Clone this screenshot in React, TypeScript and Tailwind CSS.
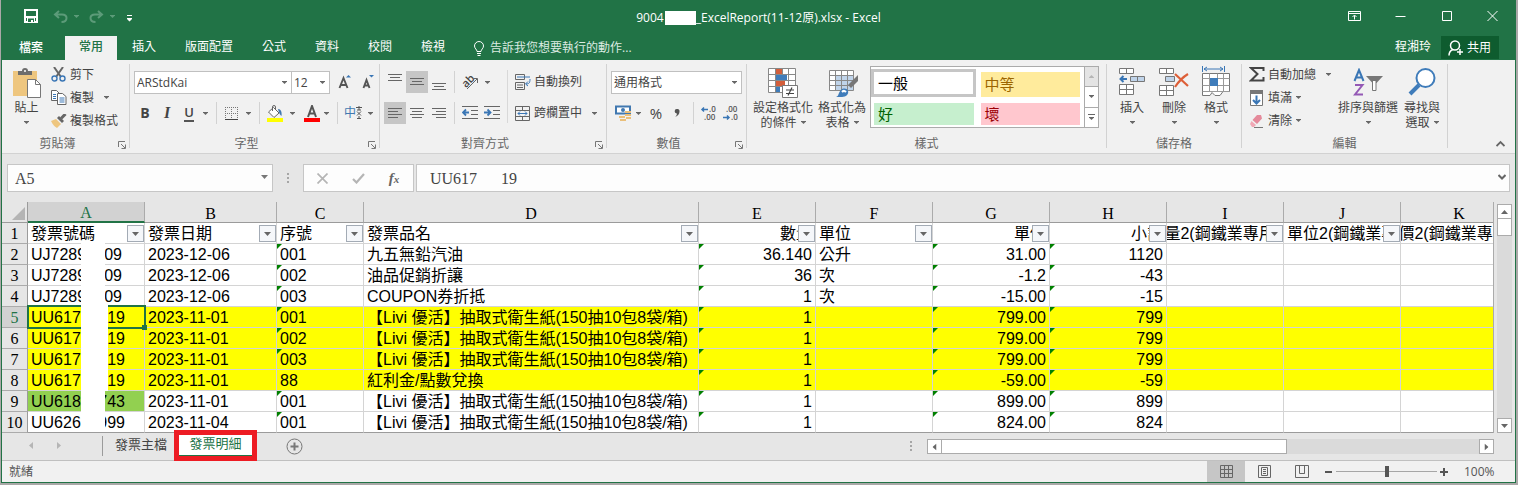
import { useState } from "react"
import type { ReactNode } from "react"
import clsx from "clsx"

type Align = "left" | "right"

interface Column {
  letter: string
  title: string
  width: string
  align: Align
  filter: boolean
}

interface Row {
  id: [string, string]
  fill?: "yellow" | "green"
  cells: string[]
}

const TABS = ["常用", "插入", "版面配置", "公式", "資料", "校閱", "檢視"]

const COLUMNS: Column[] = [
  { letter: "A", title: "發票號碼", width: "w-[117px]", align: "left", filter: true },
  { letter: "B", title: "發票日期", width: "w-[132px]", align: "left", filter: true },
  { letter: "C", title: "序號", width: "w-[87px]", align: "left", filter: true },
  { letter: "D", title: "發票品名", width: "w-[335px]", align: "left", filter: true },
  { letter: "E", title: "數量", width: "w-[117px]", align: "right", filter: true },
  { letter: "F", title: "單位", width: "w-[117px]", align: "left", filter: true },
  { letter: "G", title: "單價", width: "w-[117px]", align: "right", filter: true },
  { letter: "H", title: "小計", width: "w-[117px]", align: "right", filter: true },
  { letter: "I", title: "量2(鋼鐵業專用)", width: "w-[117px]", align: "right", filter: true },
  { letter: "J", title: "單位2(鋼鐵業專用)", width: "w-[117px]", align: "left", filter: true },
  { letter: "K", title: "價2(鋼鐵業專用)", width: "w-[117px]", align: "right", filter: false },
]

const TISSUE = "【Livi 優活】抽取式衛生紙(150抽10包8袋/箱)"

const ROWS: Row[] = [
  { id: ["UJ7289", "09"], cells: ["2023-12-06", "001", "九五無鉛汽油", "36.140", "公升", "31.00", "1120"] },
  { id: ["UJ7289", "09"], cells: ["2023-12-06", "002", "油品促銷折讓", "36", "次", "-1.2", "-43"] },
  { id: ["UJ7289", "09"], cells: ["2023-12-06", "003", "COUPON券折抵", "1", "次", "-15.00", "-15"] },
  { id: ["UU6170", "19"], fill: "yellow", cells: ["2023-11-01", "001", TISSUE, "1", "", "799.00", "799"] },
  { id: ["UU6170", "19"], fill: "yellow", cells: ["2023-11-01", "002", TISSUE, "1", "", "799.00", "799"] },
  { id: ["UU6170", "19"], fill: "yellow", cells: ["2023-11-01", "003", TISSUE, "1", "", "799.00", "799"] },
  { id: ["UU6170", "19"], fill: "yellow", cells: ["2023-11-01", "88", "紅利金/點數兌換", "1", "", "-59.00", "-59"] },
  { id: ["UU6189", "743"], fill: "green", cells: ["2023-11-01", "001", TISSUE, "1", "", "899.00", "899"] },
  { id: ["UU626", "999"], cells: ["2023-11-04", "001", TISSUE, "1", "", "824.00", "824"] },
]

// columns whose numbers are stored as text get the green corner
const TEXT_NUMBER_COLUMNS = ["C", "E", "G", "H"]
const SELECTED_ROW = 5

export default function App() {
  return (
    <div className="bg-[#aaa8a8] pl-px pr-[2px] pb-[2px] font-['Open_Sans','Noto_Sans_CJK_TC',sans-serif] text-xs text-[#444]">
      <div className="border-x border-b border-[#217346] overflow-hidden">
        <header className="bg-[#217346] text-white">
          <TitleBar />
          <TabBar />
        </header>
        <Ribbon />
        <FormulaBar />
        <div className="flex bg-[#e6e6e6]">
          <div className="flex-1 min-w-0 overflow-hidden border-r border-[#ababab]">
            <Sheet />
          </div>
          <VerticalScroll />
        </div>
        <SheetTabs />
        <StatusBar />
      </div>
    </div>
  )
}

function TitleBar() {
  return (
    <div className="grid grid-cols-[1fr_auto_1fr] h-9">
      <div className="flex items-center pl-[22px] pb-1">
        <button type="button" aria-label="儲存" className="w-[29px]">
          <svg width="14" height="14" viewBox="0 0 14 14">
            <path d="M0 0h14v14H0z" fill="#fff" />
            <path d="M2 2h10v5H2zM2 9h1v3H2zM11 9h1v3h-1zM4 9.500h6V13H9v-2H7v2H4z" fill="#217346" />
          </svg>
        </button>
        <button type="button" aria-label="復原" className="flex items-center gap-1.5 w-9 text-[#5c9b79]">
          <UndoIcon />
          <Caret />
        </button>
        <button type="button" aria-label="取消復原" className="flex items-center gap-1.5 w-[38px] text-[#5c9b79]">
          <UndoIcon flipped />
          <Caret />
        </button>
        <button type="button" aria-label="自訂快速存取工具列" className="pt-1">
          <svg width="5" height="7" viewBox="0 0 5 7" fill="#fff">
            <path d="M0 0h5v1H0zM0 3h5v1L2.500 6.500 0 4z" />
          </svg>
        </button>
      </div>
      <h1 className="flex items-center text-xs">
        9004
        <span className="w-[31px] h-3.5 ml-px bg-white" />
        _ExcelReport(11-12原).xlsx - Excel
      </h1>
      <div className="flex justify-end pb-1">
        <WindowButton label="功能區顯示選項">
          <path d="M.5.5h12v9H.5zM.5 2.500h12M6.500 8.500v-4M4.500 6l2-2 2 2" />
        </WindowButton>
        <WindowButton label="最小化">
          <path d="M1.500 5.500h10" />
        </WindowButton>
        <WindowButton label="最大化">
          <path d="M2.500.5h9v9h-9z" />
        </WindowButton>
        <WindowButton label="關閉">
          <path d="M1.500 0l10 10M11.500 0l-10 10" />
        </WindowButton>
      </div>
    </div>
  )
}

function WindowButton({ label, children }: { label: string; children: ReactNode }) {
  return (
    <button type="button" aria-label={label} className="w-[46px] flex items-center justify-center">
      <svg width="13" height="10" viewBox="0 0 13 10" fill="none" stroke="#fff" className="overflow-visible">
        {children}
      </svg>
    </button>
  )
}

function UndoIcon({ flipped }: { flipped?: boolean }) {
  return (
    <svg width="15" height="13" viewBox="0 0 15 13" fill="none" stroke="currentColor" strokeWidth="2" className={clsx(flipped && "-scale-x-100")}>
      <path d="M6 1L2 4.500 6 8M2 4.500h7c3 0 4.500 1.500 4.500 3.500S12 12 8.500 12" />
    </svg>
  )
}

function TabBar() {
  const [tab, setTab] = useState("常用")
  return (
    <div className="flex h-6">
      <button type="button" className="w-[58px] mr-[5px] font-medium">
        檔案
      </button>
      <nav className="flex gap-px">
        {TABS.map((name) => (
          <button
            key={name}
            type="button"
            onClick={() => setTab(name)}
            className={clsx("px-[14px] pb-0.5", tab === name && "bg-[#f1f1f1] text-[#217346] font-medium")}
          >
            {name}
          </button>
        ))}
      </nav>
      <button type="button" className="flex items-center gap-1.5 ml-[15px] text-[#dcebe2]">
        <svg width="10" height="15" viewBox="0 0 10 15" fill="none" stroke="#fff">
          <path d="M3 10.500c0-2-2.500-3-2.500-5.500a4.500 4.500 0 0 1 9 0c0 2.500-2.500 3.500-2.500 5.500zM3 12.500h4M3.500 14.500h3" />
        </svg>
        告訴我您想要執行的動作...
      </button>
      <div className="flex-1" />
      <button type="button" className="mr-2.5 pb-0.5">
        程湘玲
      </button>
      <button type="button" className="flex items-center gap-1 w-[58px] h-[23px] mr-4 pl-[7px] bg-[#0e5c2f]">
        <svg width="15" height="16" viewBox="0 0 15 16" fill="none" stroke="#fff" strokeWidth="1.500">
          <circle cx="7" cy="5.500" r="4.500" />
          <path d="M1 15.500c0-3 1.500-5 4-6M9 12h6M12 9v6" />
        </svg>
        共用
      </button>
    </div>
  )
}

/* ---------- ribbon ---------- */

function Caret({ className }: { className?: string }) {
  return (
    <svg width="5" height="3" viewBox="0 0 5 3" fill="currentColor" className={clsx("shrink-0", className)}>
      <path d="M0 0h5v.5L2.500 3 0 .5z" />
    </svg>
  )
}

function WideCaret({ className }: { className?: string }) {
  return (
    <svg width="7" height="4" viewBox="0 0 7 4" fill="currentColor" className={clsx("shrink-0", className)}>
      <path d="M0 0h7L3.500 4z" />
    </svg>
  )
}

function Group({ label, width, launcher, children }: { label: string; width: string; launcher?: boolean; children: ReactNode }) {
  return (
    <>
      <section className={clsx("flex flex-col shrink-0", width)}>
        <div className="flex h-[73px]">{children}</div>
        <div className="flex h-5 items-center pt-0.5 text-[#666]">
          <span className="flex-1 text-center">{label}</span>
          {launcher && (
            <button type="button" aria-label={`${label}設定`} className="w-4 pl-[5px] pt-0.5">
              <svg width="8" height="8" viewBox="0 0 8 8" fill="none" stroke="#777">
                <path d="M.5 6V.5H7M3 3l4 4M7.500 3.500v4h-4" />
              </svg>
            </button>
          )}
        </div>
      </section>
      <div className="w-px my-1 mb-[5px] bg-[#d2d2d2] shrink-0" />
    </>
  )
}

function BigButton({ icon, lines, width, caretInline }: { icon: ReactNode; lines: string[]; width: string; caretInline?: boolean }) {
  return (
    <button type="button" className={clsx("flex flex-col items-center pt-2 leading-[15px] whitespace-nowrap shrink-0", width)}>
      <span className="flex justify-center h-8">{icon}</span>
      <span>{lines[0]}</span>
      <span className="flex items-center gap-1 h-[15px]">
        {caretInline && lines[1]}
        <Caret className="text-[#666]" />
      </span>
    </button>
  )
}

function SmallButton({ icon, label, caret }: { icon: ReactNode; label: string; caret?: "near" | "far" }) {
  return (
    <button type="button" className="flex items-center h-[23px] whitespace-nowrap">
      <span className="w-[19px] flex items-center">{icon}</span>
      {label}
      {caret && <Caret className={clsx("text-[#666]", caret === "far" ? "ml-2.5" : "ml-1")} />}
    </button>
  )
}

function Tool({ label, width, active, children }: { label: string; width: string; active?: boolean; children: ReactNode }) {
  return (
    <button type="button" aria-label={label} className={clsx("h-[22px] flex items-center justify-center shrink-0", width, active && "bg-[#c6c6c6]")}>
      {children}
    </button>
  )
}

// separate drop-down arrow beside a tool
function Drop({ label, width }: { label: string; width: string }) {
  return (
    <button type="button" aria-label={label} className={clsx("h-[22px] flex items-center shrink-0 text-[#666]", width)}>
      <Caret />
    </button>
  )
}

function Divider() {
  return <div className="w-px h-[22px] bg-[#d2d2d2] shrink-0" />
}

function Combo({ label, value, width }: { label: string; value: string; width: string }) {
  return (
    <div className={clsx("relative h-[23px]", width)}>
      <select aria-label={label} className="appearance-none w-full h-full border border-[#c0c0c0] bg-white pl-0.5 leading-5">
        <option>{value}</option>
      </select>
      <Caret className="absolute right-[5px] top-2.5 text-[#666] pointer-events-none" />
    </div>
  )
}

function Lines({ rows }: { rows: [number, number, number][] }) {
  return (
    <svg width="14" height="16" viewBox="0 0 14 16" stroke="#666">
      {rows.map(([x1, x2, y]) => (
        <path key={y} d={`M${x1} ${y + 0.5}H${x2}`} />
      ))}
    </svg>
  )
}

function Ribbon() {
  return (
    <div className="flex bg-[#f1f1f1] border-b border-[#d2d2d2] h-[94px]">
      <Group label="剪貼簿" width="w-[127px]" launcher>
        <BigButton icon={<PasteIcon />} lines={["貼上"]} width="w-[49px]" />
        <div className="pt-[3px]">
          <SmallButton icon={<CutIcon />} label="剪下" />
          <SmallButton icon={<CopyIcon />} label="複製" caret="far" />
          <SmallButton icon={<BrushIcon />} label="複製格式" />
        </div>
      </Group>

      <Group label="字型" width="w-[249px]" launcher>
        <div className="pt-[11px] pl-1">
          <div className="flex">
            <Combo label="字型名稱" value="ARStdKai" width="w-[158px]" />
            <Combo label="字型大小" value="12" width="w-[39px] -ml-px" />
            <Tool label="放大字型" width="w-6 ml-1">
              <FontSizeIcon up />
            </Tool>
            <Tool label="縮小字型" width="w-[22px]">
              <FontSizeIcon />
            </Tool>
          </div>
          <div className="flex mt-2">
            <Tool label="粗體" width="w-[22px]">
              <b className="text-sm">B</b>
            </Tool>
            <Tool label="斜體" width="w-[22px]">
              <i className="text-base font-bold font-['Liberation_Serif',serif]">I</i>
            </Tool>
            <Tool label="底線" width="w-[22px]">
              <span className="text-[13px] leading-4 font-semibold border-b-2 border-[#555]">U</span>
            </Tool>
            <Drop label="底線樣式" width="w-4 pl-[3px]" />
            <Divider />
            <Tool label="框線" width="w-[29px]">
              <svg width="13" height="13" viewBox="0 0 13 13" stroke="#777" fill="none">
                <path d="M.5 0v12M6.500 0v12M12.500 0v12M0 .5h13M0 6.500h13" strokeDasharray="1 1" />
                <path d="M0 12.500h13" stroke="#444" />
              </svg>
            </Tool>
            <Drop label="框線樣式" width="w-[13px]" />
            <Divider />
            <Tool label="填滿色彩" width="w-[30px]">
              <svg width="18" height="17" viewBox="0 0 18 17">
                <path d="M7.500 2.500L13 8l-5 4.500L2.500 7z" fill="#fff" stroke="#666" />
                <path d="M6.500 6V2a1.500 1.500 0 0 1 3 0v3" fill="none" stroke="#666" />
                <path d="M12 4c3 0 4 3 3.500 7C14 10 13 8 12 4z" fill="#4178b0" />
                <path d="M1 13h16v4H1z" fill="#ff0" />
              </svg>
            </Tool>
            <Drop label="填滿色彩選項" width="w-2.5" />
            <Tool label="字型色彩" width="w-6">
              <svg width="16" height="17" viewBox="0 0 16 17">
                <path d="M4 12l4-11 4 11M5.500 8.500h5" fill="none" stroke="#555" strokeWidth="2" />
                <path d="M0 13h16v4H0z" fill="red" />
              </svg>
            </Tool>
            <Drop label="字型色彩選項" width="w-[13px]" />
            <Divider />
            <Tool label="注音標示" width="w-[30px]">
              <span className="text-[#4178b0]">中</span>
              <svg width="6" height="14" viewBox="0 0 6 14" fill="none" stroke="#555">
                <path d="M0 1.500h6M1 4h4M3 0v4M1 5.500l4 4M5 5.500l-4 4M1 12.500h4M3 10v3" />
              </svg>
            </Tool>
            <Drop label="注音標示選項" width="w-2" />
          </div>
        </div>
      </Group>

      <Group label="對齊方式" width="w-[226px]" launcher>
        <div className="pt-[11px] pl-1">
          <div className="flex">
            <Tool label="靠上對齊" width="w-[22px]">
              <Lines rows={[[0, 14, 0], [2, 12, 3], [0, 14, 6]]} />
            </Tool>
            <Tool label="置中對齊" width="w-[22px]" active>
              <Lines rows={[[0, 14, 4], [2, 12, 7], [0, 14, 10]]} />
            </Tool>
            <Tool label="靠下對齊" width="w-[22px] mr-1">
              <Lines rows={[[0, 14, 9], [2, 12, 12], [0, 14, 15]]} />
            </Tool>
            <Divider />
            <Tool label="方向" width="w-[30px]">
              <svg width="18" height="16" viewBox="0 0 18 16" className="overflow-visible">
                <text x="1" y="11" transform="rotate(-45 7 8)" fontSize="11" fontWeight="600" fill="#444">
                  ab
                </text>
                <path d="M6 15L16 5M12.500 4.500h4V9" fill="none" stroke="#666" />
              </svg>
            </Tool>
            <Drop label="方向選項" width="w-2" />
          </div>
          <div className="flex mt-[9px]">
            <Tool label="靠左對齊" width="w-[22px]" active>
              <Lines rows={[[0, 14, 3], [0, 10, 6], [0, 14, 9], [0, 10, 12]]} />
            </Tool>
            <Tool label="水平置中" width="w-[22px]">
              <Lines rows={[[0, 14, 3], [2, 12, 6], [0, 14, 9], [2, 12, 12]]} />
            </Tool>
            <Tool label="靠右對齊" width="w-[22px] mr-1">
              <Lines rows={[[0, 14, 3], [4, 14, 6], [0, 14, 9], [4, 14, 12]]} />
            </Tool>
            <Divider />
            <Tool label="減少縮排" width="w-[22px] ml-1">
              <IndentIcon />
            </Tool>
            <Tool label="增加縮排" width="w-[22px]">
              <IndentIcon increase />
            </Tool>
          </div>
        </div>
        <div className="w-px mt-2.5 mb-2.5 ml-1 bg-[#d8d8d8]" />
        <div className="pt-[11px] pl-[7px] whitespace-nowrap">
          <button type="button" className="flex items-center gap-[3px] h-[22px]">
            <svg width="16" height="16" viewBox="0 0 16 16" fill="none" stroke="#666">
              <path d="M.5.5h9v5h-9zM.5 8.500h9v7h-9zM2 11h6M2 13.500h6" />
              <path d="M2 3h13M15 5c0 4-1 5-4 5M13 7.500L10.500 10l2.500 2" stroke="#3a76b5" />
            </svg>
            自動換列
          </button>
          <button type="button" className="flex items-center h-[22px] mt-[9px]">
            <svg width="15" height="15" viewBox="0 0 15 15" fill="none" stroke="#666" className="mr-1">
              <path d="M.5.5h14v14H.5zM.5 4.500h14M.5 10.500h14M7.500.5v4M7.500 10.500v4" />
              <path d="M3 7.500h9M5 5.500l-2 2 2 2M10 5.500l2 2-2 2" stroke="#3a76b5" />
            </svg>
            跨欄置中
            <Caret className="ml-2.5 text-[#666]" />
          </button>
        </div>
      </Group>

      <Group label="數值" width="w-[139px]" launcher>
        <div className="pt-[11px] pl-1">
          <Combo label="數值格式" value="通用格式" width="w-[131px]" />
          <div className="flex mt-2">
            <Tool label="會計數字格式" width="w-[25px]">
              <svg width="17" height="16" viewBox="0 0 17 16">
                <path d="M1 1.500h14v7H1z" fill="#fff" stroke="#4178b0" strokeWidth="2" />
                <circle cx="8" cy="5" r="2" fill="#4178b0" />
                <path d="M10 6h6v2h-6zM10 9h6v2h-6zM4 11h6v2H4zM5 14h6v2H5zM11 12h5v2h-5z" fill="#eabf7a" />
              </svg>
            </Tool>
            <Drop label="會計數字格式選項" width="w-2" />
            <Tool label="百分比樣式" width="w-6">
              <span className="text-[15px] font-medium">%</span>
            </Tool>
            <Tool label="千分位樣式" width="w-[18px]">
              <svg width="6" height="8" viewBox="0 0 6 8" fill="#555">
                <path d="M3 0a2.200 2.200 0 0 1 2.500 2.500C5.500 5 4 7 1 8c1.500-1.500 2-2.500 1.800-3.500A2.200 2.200 0 0 1 3 0z" />
              </svg>
            </Tool>
            <div className="w-[7px]" />
            <Divider />
            <Tool label="增加小數位數" width="w-[22px] ml-1">
              <DecimalIcon increase />
            </Tool>
            <Tool label="減少小數位數" width="w-[22px]">
              <DecimalIcon />
            </Tool>
          </div>
        </div>
      </Group>

      <Group label="樣式" width="w-[359px]">
        <BigButton icon={<ConditionalIcon />} lines={["設定格式化", "的條件"]} width="w-[72px]" caretInline />
        <BigButton icon={<FormatTableIcon />} lines={["格式化為", "表格"]} width="w-[46px]" caretInline />
        <div className="flex mt-1.5 ml-[5px] h-[62px] w-[229px] border border-[#ababab] bg-white text-[15px] leading-5 text-black">
          <div className="grid grid-cols-2 gap-1 flex-1 pt-0.5 pr-1">
            <button type="button" className="h-7 -mr-0.5 border-3 border-[#c6c6c6] pl-1 text-left">
              一般
            </button>
            <button type="button" className="my-[3px] ml-[3px] pl-1 bg-[#ffeb9c] text-[#9c6500] text-left">
              中等
            </button>
            <button type="button" className="h-[22px] -mt-px ml-[3px] pl-1 bg-[#c6efce] text-[#006100] text-left">
              好
            </button>
            <button type="button" className="h-[22px] -mt-px ml-[3px] pl-1 bg-[#ffc7ce] text-[#9c0006] text-left">
              壞
            </button>
          </div>
          <div className="flex flex-col w-3.5 border-l border-[#ababab] divide-y divide-[#ababab] text-[#666]">
            <button type="button" aria-label="上一列" className="flex-1 flex items-center justify-center bg-[#e4e4e4] text-[#b5b5b5]">
              <Caret className="rotate-180" />
            </button>
            <button type="button" aria-label="下一列" className="flex-1 flex items-center justify-center">
              <Caret />
            </button>
            <button type="button" aria-label="其他" className="flex-1 flex flex-col gap-0.5 items-center justify-center">
              <span className="w-[7px] h-px bg-[#666]" />
              <Caret />
            </button>
          </div>
        </div>
      </Group>

      <Group label="儲存格" width="w-[134px]">
        <div className="w-1" />
        <BigButton icon={<InsertIcon />} lines={["插入"]} width="w-[42px]" />
        <BigButton icon={<DeleteIcon />} lines={["刪除"]} width="w-[42px]" />
        <BigButton icon={<FormatIcon />} lines={["格式"]} width="w-[42px]" />
      </Group>

      <Group label="編輯" width="w-[205px]">
        <div className="pt-[3px] pl-[7px] w-[92px]">
          <SmallButton
            icon={
              <svg width="16" height="15" viewBox="0 0 16 15" fill="none" stroke="#444" strokeWidth="2">
                <path d="M14.500 4V1H2l6.500 6L2 13.500h12.500V10" />
              </svg>
            }
            label="自動加總"
            caret="far"
          />
          <SmallButton
            icon={
              <svg width="15" height="16" viewBox="0 0 15 16">
                <path d="M1.500.5h12v15h-12z" fill="#fff" stroke="#777" />
                <path d="M1 0h13v4H1z" fill="#777" />
                <path d="M7.500 5.500v8M4 10l3.500 3.500L11 10" fill="none" stroke="#3a76b5" strokeWidth="2" />
              </svg>
            }
            label="填滿"
            caret="near"
          />
          <SmallButton
            icon={
              <svg width="15" height="14" viewBox="0 0 15 14">
                <path d="M8 1h4l1 3.500L8 10 3.500 6z" fill="#e58a9b" />
                <path d="M2.500 7l4.500 4-2 2H3L1 10z" fill="#f0a8b5" />
                <path d="M5 13.500h9" stroke="#777" />
              </svg>
            }
            label="清除"
            caret="near"
          />
        </div>
        <BigButton icon={<SortIcon />} lines={["排序與篩選"]} width="w-[68px]" />
        <BigButton icon={<FindIcon />} lines={["尋找與", "選取"]} width="w-10" caretInline />
      </Group>

      <div className="flex-1 flex items-end justify-end pr-2.5 pb-1">
        <button type="button" aria-label="摺疊功能區">
          <svg width="9" height="9" viewBox="0 0 9 9" fill="none" stroke="#666" strokeWidth="1.800">
            <path d="M.5 6l4-4 4 4" />
          </svg>
        </button>
      </div>
    </div>
  )
}

/* ---------- ribbon icons ---------- */

function PasteIcon() {
  return (
    <svg width="30" height="30" viewBox="0 0 30 30">
      <path d="M1 3h24v25H1z" fill="#eec67f" />
      <path d="M6 3h4a3 3 0 0 1 6 0h4v4H6z" fill="#6d6d6d" />
      <circle cx="13" cy="3" r="1" fill="#fff" />
      <path d="M15.500 11.500h8l5 5v13h-13z" fill="#fff" stroke="#777" />
      <path d="M23.500 11.500v5h5" fill="none" stroke="#777" />
    </svg>
  )
}

function CutIcon() {
  return (
    <svg width="15" height="15" viewBox="0 0 15 15" fill="none">
      <path d="M3 0l7 10M12 0L5 10" stroke="#666" strokeWidth="2" />
      <circle cx="3.500" cy="11.500" r="2.500" stroke="#3a76b5" strokeWidth="1.400" />
      <circle cx="11.500" cy="11.500" r="2.500" stroke="#3a76b5" strokeWidth="1.400" />
    </svg>
  )
}

function CopyIcon() {
  return (
    <svg width="16" height="15" viewBox="0 0 16 15" fill="#fff" stroke="#666">
      <path d="M.5.5h5l3 3v7h-8z" />
      <path d="M6.500 3.500h5l3.500 3v8H6.500z" />
      <path d="M2 4.500h3M2 6.500h3M2 8.500h3M8.500 8h5M8.500 10h5M8.500 12h5" stroke="#3a76b5" />
    </svg>
  )
}

function BrushIcon() {
  return (
    <svg width="16" height="14" viewBox="0 0 16 14">
      <path d="M0 7l5-2 5 5-4 4c-2-1-4-3-6-7z" fill="#eec67f" />
      <path d="M6 4l2-2 5 5-2 2z" fill="#666" />
      <path d="M10 4.500L14.500 0" stroke="#666" strokeWidth="3" />
    </svg>
  )
}

function FontSizeIcon({ up }: { up?: boolean }) {
  return (
    <svg width="16" height="16" viewBox="0 0 16 16">
      {up ? (
        <path d="M1.500 14L5.500 4l4 10M3 11h5" fill="none" stroke="#555" strokeWidth="1.900" />
      ) : (
        <path d="M2.500 14l3-8 3 8M3.500 11.500h4" fill="none" stroke="#555" strokeWidth="1.900" />
      )}
      <path d={up ? "M8 3.500h5L10.500 1z" : "M8 1h5l-2.500 2.500z"} fill="#3a76b5" />
    </svg>
  )
}

function IndentIcon({ increase }: { increase?: boolean }) {
  return (
    <svg width="16" height="14" viewBox="0 0 16 14" fill="none" stroke="#666">
      <path d="M0 .5h16M9 4.500h7M9 8.500h7M0 12.500h16" />
      <path d={increase ? "M0 6.500h6M3.500 3.500l3 3-3 3" : "M7 6.500H1M4 3.500l-3 3 3 3"} stroke="#3a76b5" strokeWidth="1.800" />
    </svg>
  )
}

function DecimalIcon({ increase }: { increase?: boolean }) {
  return (
    <svg width="16" height="15" viewBox="0 0 16 15" fontSize="8" fontWeight="600" fill="#555" className="overflow-visible">
      <text x={increase ? 8 : 3} y="6">
        {increase ? ".0" : ".00"}
      </text>
      <text x={increase ? 3 : 8} y="14">
        {increase ? ".00" : ".0"}
      </text>
      <path d={increase ? "M7 3.500H1M3 1.500l-2 2 2 2" : "M0 11.500h6M4 9.500l2 2-2 2"} fill="none" stroke="#3a76b5" strokeWidth="1.500" />
    </svg>
  )
}

function ConditionalIcon() {
  return (
    <svg width="30" height="30" viewBox="0 0 30 30">
      <path d="M.5.500h27v24H.5z" fill="#fff" />
      <path d="M8 1h6v5H8zM8 12h9v6H8z" fill="#d35e3b" />
      <path d="M8 6h11v6H8zM8 18h4v6H8z" fill="#3f7cba" />
      <path d="M.5.500h27v24H.5zM.5 6.500h27M.5 12.500h27M.5 18.500h27M7.500.500v24M20.500.500v24M14.500.500v6" fill="none" stroke="#888" />
      <path d="M14.500 17.500h15v12h-15z" fill="#fff" stroke="#777" />
      <path d="M18 22h8M18 25.500h8M24 19.500l-4 8" stroke="#444" strokeWidth="1.200" />
    </svg>
  )
}

function FormatTableIcon() {
  return (
    <svg width="30" height="30" viewBox="-2 0 30 30" className="overflow-visible">
      <path d="M.5 2.500h24v20H.5z" fill="#fff" />
      <path d="M7 7h17v16H7z" fill="#c0d4ea" />
      <path d="M.5 2.500h24v20H.5zM.5 7.500h24M.5 12.500h24M.5 17.500h24M6.500 2.500v20M12.500 2.500v20M18.500 2.500v20" fill="none" stroke="#888" />
      <path d="M29 7v6l-7 7-3-3z" fill="#777" />
      <path d="M7 29c3-1 2-4 5-7 2-2 6-2 7 1s-2 6-6 6z" fill="#3f7cba" />
      <path d="M13 24c2-2 3-1 4 0" fill="none" stroke="#fff" strokeWidth="2" />
    </svg>
  )
}

function InsertIcon() {
  return (
    <svg width="28" height="30" viewBox="0 0 28 30" fill="#fff" stroke="#777">
      <path d="M1.500.5h14v5h-14zM8.500.5v5M1.500 16.500h14v10h-14zM8.500 16.500v10M1.500 21.500h14" />
      <path d="M12.500 8.500h14v5h-14zM19.500 8.500v5" fill="#c0d4ea" />
      <path d="M9 11H2.500M5.500 8l-3 3 3 3" fill="none" stroke="#3a76b5" strokeWidth="2" />
    </svg>
  )
}

function DeleteIcon() {
  return (
    <svg width="30" height="30" viewBox="0 0 30 30" fill="#fff" stroke="#777">
      <path d="M.5.5h14v5H.5zM7.500.5v5M.5 17.500h14v10H.5zM7.500 17.500v10M.5 22.500h14" />
      <path d="M6.500 8.500h9v5h-9z" fill="#c0d4ea" />
      <path d="M16 6l13 12M29 6c-5 3-9 7-13 13" fill="none" stroke="#dd5f38" strokeWidth="2.200" />
    </svg>
  )
}

function FormatIcon() {
  return (
    <svg width="28" height="31" viewBox="0 0 28 31" className="-mt-1 overflow-visible">
      <path d="M.5 9.500h27v18H21l-3 4h-5l-3-3-2 3H.5z" fill="#fff" stroke="#777" />
      <path d="M.5 14.500h27M.5 21.500h27M.5 27.500h27M7.500 9.500v18M15.500 9.500v18M21.500 9.500v18" fill="none" stroke="#999" />
      <path d="M8 14h8v8H8z" fill="#3f7cba" />
      <path d="M.5 2v6M22.500 2v6M2 5h19M5 3L2 5l3 2M18 3l3 2-3 2" fill="none" stroke="#3a76b5" />
    </svg>
  )
}

function SortIcon() {
  return (
    <svg width="30" height="30" viewBox="0 0 30 30" fill="none">
      <path d="M1.500 13L6 2l4.500 11M3 9.500h6" stroke="#3a76b5" strokeWidth="2" />
      <path d="M2 17h7.500L2 26.500h8" stroke="#9459b5" strokeWidth="2" />
      <path d="M13 8h17l-6.500 7h-4z" fill="#777" />
      <path d="M19.500 13v9.500h3.500V13" fill="#fff" stroke="#777" />
    </svg>
  )
}

function FindIcon() {
  return (
    <svg width="28" height="30" viewBox="0 0 28 30" fill="none" stroke="#3f7cba">
      <path d="M11 17l-9 9" strokeWidth="4" />
      <circle cx="17.500" cy="10" r="9" fill="#fff" strokeWidth="2" />
    </svg>
  )
}

/* ---------- formula bar ---------- */

function FormulaBar() {
  return (
    <div className="flex items-start bg-[#e6e6e6] h-12 pt-2.5 pl-[5px] pr-[5px] text-[#444]">
      <div className="relative w-[266px] h-7">
        <input
          aria-label="名稱方塊"
          defaultValue="A5"
          className="w-full h-full border border-[#c6c6c6] bg-[#fdfdfd] pl-[7px] pt-0.5 text-base font-['Liberation_Serif',serif] outline-none"
        />
        <WideCaret className="absolute right-[5px] top-[11px] text-[#777] pointer-events-none" />
      </div>
      <Dots className="mx-3.5 mt-[9px]" />
      <div className="flex items-center w-[111px] h-7 border border-[#c6c6c6] bg-[#fdfdfd]">
        <button type="button" aria-label="取消" className="w-9 flex justify-center">
          <svg width="11" height="11" viewBox="0 0 11 11" stroke="#b5b5b5" strokeWidth="1.700">
            <path d="M.5.5l10 10M10.500.5l-10 10" />
          </svg>
        </button>
        <button type="button" aria-label="輸入" className="w-9 flex justify-center">
          <svg width="13" height="11" viewBox="0 0 13 11" fill="none" stroke="#b5b5b5" strokeWidth="2.200">
            <path d="M1 6l3.500 3.500L12 1" />
          </svg>
        </button>
        <button type="button" aria-label="插入函數" className="w-9 text-[15px] leading-5 font-bold italic font-['Liberation_Serif',serif] text-[#666]">
          f<span className="text-[11px]">x</span>
        </button>
      </div>
      <div className="relative flex-1 h-7 ml-0.5">
        <input
          aria-label="資料編輯列"
          defaultValue="UU617      19"
          className="w-full h-full border border-[#c6c6c6] bg-[#fdfdfd] pl-[13px] pt-0.5 text-base font-['Liberation_Serif',serif] outline-none"
        />
        <svg width="8" height="6" viewBox="0 0 8 6" fill="none" stroke="#666" strokeWidth="2" className="absolute right-1 top-2.5">
          <path d="M.5 1L4 4.500 7.500 1" />
        </svg>
      </div>
    </div>
  )
}

function Dots({ className }: { className?: string }) {
  return (
    <svg width="2" height="10" viewBox="0 0 2 10" fill="#a6a6a6" className={clsx("shrink-0", className)}>
      <path d="M0 0h2v2H0zM0 4h2v2H0zM0 8h2v2H0z" />
    </svg>
  )
}

/* ---------- sheet ---------- */

function Sheet() {
  return (
    <table className="table-fixed w-[1430px] border-separate border-spacing-0 text-base leading-[22px] text-black font-['Liberation_Sans','Noto_Sans_CJK_TC',sans-serif]">
      <colgroup>
        <col className="w-[26px]" />
        {COLUMNS.map((c) => (
          <col key={c.letter} className={c.width} />
        ))}
      </colgroup>
      <thead>
        <tr className="h-[21px] leading-[17px] font-['Liberation_Serif',serif]">
          <th aria-label="全選" className="p-0 border-b border-r border-[#9b9b9b]">
            <svg width="13" height="13" viewBox="0 0 13 13" fill="#b4b4b4" className="ml-2.5 mt-0.5">
              <path d="M13 0v13H0z" />
            </svg>
          </th>
          {COLUMNS.map((c) => (
            <th
              key={c.letter}
              scope="col"
              className={clsx(
                "p-0 pt-0.5 font-normal border-r border-r-[#ababab]",
                c.letter === "A" ? "bg-[#d2d2d2] text-[#217346] border-b-2 border-b-[#217346]" : "border-b border-b-[#9b9b9b]"
              )}
            >
              {c.letter}
            </th>
          ))}
        </tr>
      </thead>
      <tbody>
        <tr className="h-[21px]">
          <RowHeader n={1} />
          {COLUMNS.map((c) => (
            <td key={c.letter} className="relative p-0 bg-white border-b border-r border-[#d4d4d4]">
              <CellText align={c.align}>{c.title}</CellText>
              {c.filter && <FilterButton label={c.title} />}
            </td>
          ))}
        </tr>
        {ROWS.map((row, i) => (
          <DataRow key={i} row={row} n={i + 2} last={i === ROWS.length - 1} />
        ))}
      </tbody>
    </table>
  )
}

function RowHeader({ n }: { n: number }) {
  return (
    <th
      scope="row"
      className={clsx(
        "p-0 pt-0.5 leading-[18px] font-normal border-r border-b border-r-[#9b9b9b] border-b-[#ababab] font-['Liberation_Serif',serif]",
        n === SELECTED_ROW && "bg-[#d2d2d2] text-[#217346]"
      )}
    >
      {n}
    </th>
  )
}

function CellText({ align, children }: { align: Align; children: ReactNode }) {
  return (
    <div className={clsx("flex h-5 overflow-hidden whitespace-nowrap", align === "right" ? "justify-end pr-[3px]" : "pl-[3px]")}>
      <span className="shrink-0">{children}</span>
    </div>
  )
}

function FilterButton({ label }: { label: string }) {
  return (
    <button
      type="button"
      aria-label={`篩選 ${label}`}
      className="absolute right-0 top-0.5 w-[17px] h-[17px] flex items-center justify-center bg-[#f5f7fa] border border-[#a3abb5] text-[#666]"
    >
      <WideCaret />
    </button>
  )
}

function DataRow({ row, n, last }: { row: Row; n: number; last: boolean }) {
  const line = last ? "border-b-[#9b9b9b]" : "border-b-[#d4d4d4]"
  const fill = row.fill === "yellow" ? "bg-[#ffff00]" : "bg-white"
  return (
    <tr className="h-[21px]">
      <RowHeader n={n} />
      <td className={clsx("relative p-0 border-b border-r border-r-[#d4d4d4]", line, row.fill === "green" ? "bg-[#92d050]" : fill)}>
        {n === SELECTED_ROW && (
          <div className="absolute -left-px -right-0.5 -top-0.5 -bottom-0.5 border-2 border-[#217346] z-10">
            <span className="absolute -right-[3px] -bottom-[3px] w-[5px] h-[5px] bg-[#217346]" />
          </div>
        )}
        <div className="flex h-5 pl-[3px] overflow-hidden">
          <span className="w-[50px] overflow-hidden">{row.id[0]}</span>
          <span className={clsx("flex justify-end ml-6 overflow-hidden", n < 5 ? "w-[17px]" : "w-5")}>
            <span className="shrink-0">{row.id[1]}</span>
          </span>
        </div>
        {/* hidden middle digits */}
        <span className={clsx("absolute left-[53px] -top-0.5 bg-white z-20", row.fill === "yellow" ? "w-[27px]" : "w-6", last ? "bottom-0" : "-bottom-px")} />
      </td>
      {COLUMNS.slice(1).map((c, i) => {
        const value = row.cells[i] ?? ""
        return (
          <td key={c.letter} className={clsx("relative p-0 border-b border-r border-r-[#d4d4d4]", line, fill)}>
            {TEXT_NUMBER_COLUMNS.includes(c.letter) && value !== "88" && (
              <span className="absolute left-0 top-0 border-t-5 border-r-5 border-t-[#008000] border-r-transparent" />
            )}
            <CellText align={c.align}>{value}</CellText>
          </td>
        )
      })}
    </tr>
  )
}

function VerticalScroll() {
  return (
    <div className="flex flex-col w-[21px] pt-0.5 pl-[3px] pr-[3px] text-[#666]">
      <button type="button" aria-label="向上捲動" className="h-[15px] flex items-center justify-center bg-white border border-[#ababab]">
        <WideCaret className="rotate-180" />
      </button>
      <div className="flex-1 bg-[#dadada]">
        <div className="h-[17px] bg-white border border-t-0 border-[#ababab]" />
      </div>
      <button type="button" aria-label="向下捲動" className="h-[15px] flex items-center justify-center bg-white border border-[#ababab]">
        <WideCaret />
      </button>
    </div>
  )
}

function SheetTabs() {
  return (
    <div className="flex h-7 bg-[#e6e6e6] border-b border-[#c0c0c0]">
      <div className="flex w-[100px] pl-[27px] gap-6 pt-[9px] text-[#b5b5b5]">
        <button type="button" aria-label="上一個工作表" className="h-[7px]">
          <svg width="4" height="7" viewBox="0 0 4 7" fill="currentColor">
            <path d="M4 0v7L0 3.500z" />
          </svg>
        </button>
        <button type="button" aria-label="下一個工作表" className="h-[7px]">
          <svg width="4" height="7" viewBox="0 0 4 7" fill="currentColor">
            <path d="M0 0v7l4-3.500z" />
          </svg>
        </button>
      </div>
      <div className="w-px h-5 mt-[3px] bg-[#9b9b9b]" />
      <button type="button" className="w-[76px] h-6 text-[13px]">
        發票主檔
      </button>
      <button type="button" className="relative w-[73px] h-[23px] bg-white border-b border-[#217346] text-[13px] text-[#217346]">
        發票明細
        <span className="absolute -left-[5px] -right-[5px] -top-[3px] -bottom-[6px] border-5 border-[#ed1c24] z-30" />
      </button>
      <button type="button" aria-label="新增工作表" className="ml-[34px] self-start mt-[5px]">
        <svg width="17" height="17" viewBox="0 0 17 17" fill="none" stroke="#777">
          <circle cx="8.500" cy="8.500" r="7.500" />
          <path d="M4.500 8.500h8M8.500 4.500v8" strokeWidth="2" />
        </svg>
      </button>
      <div className="flex-1" />
      <Dots className="mt-2 mr-[15px]" />
      <div className="flex w-[567px] h-[15px] mt-1.5 mr-[21px] bg-[#dadada] text-[#666]">
        <button type="button" aria-label="向左捲動" className="w-[15px] flex items-center justify-center bg-white border border-[#ababab]">
          <WideCaret className="rotate-90" />
        </button>
        <div className="w-[345px] bg-white border border-l-0 border-[#ababab]" />
        <div className="flex-1" />
        <button type="button" aria-label="向右捲動" className="w-[15px] flex items-center justify-center bg-white border border-[#ababab]">
          <WideCaret className="-rotate-90" />
        </button>
      </div>
    </div>
  )
}

function StatusBar() {
  const [zoom, setZoom] = useState(100)
  return (
    <footer className="flex items-center h-[21px] bg-[#f1f1f1] text-[#555]">
      <span className="pl-[7px] flex-1">就緒</span>
      <button type="button" aria-label="標準模式" className="w-[38px] h-full flex items-center justify-center bg-[#c6c6c6]">
        <svg width="13" height="13" viewBox="0 0 13 13" fill="none" stroke="#666">
          <path d="M.5.5h12v12H.5zM4.500 0v13M8.500 0v13M0 4.500h13M0 8.500h13" />
        </svg>
      </button>
      <button type="button" aria-label="整頁模式" className="w-[38px] flex justify-center">
        <svg width="13" height="13" viewBox="0 0 13 13" fill="none" stroke="#666">
          <path d="M.5.5h12v12H.5zM3.500 2.500h6v8h-6zM5 4.500h3M5 6.500h3M5 8.500h3" />
        </svg>
      </button>
      <button type="button" aria-label="分頁預覽" className="w-[38px] flex justify-center">
        <svg width="14" height="13" viewBox="0 0 14 13" fill="none" stroke="#666">
          <path d="M.5.5h13v12H.5zM4.500 0v8.500h5V0M9.500 8.500V0" />
        </svg>
      </button>
      <button type="button" aria-label="縮小" className="ml-1 w-[15px]">
        <span className="block w-[7px] h-0.5 bg-[#555]" />
      </button>
      <input
        type="range"
        aria-label="顯示比例"
        min={0}
        max={200}
        value={zoom}
        onChange={(e) => setZoom(Number(e.target.value))}
        className="appearance-none w-[101px] h-3 -ml-1 bg-[linear-gradient(#a6a6a6,#a6a6a6)] bg-[length:100%_1px] bg-center bg-no-repeat [&::-webkit-slider-thumb]:appearance-none [&::-webkit-slider-thumb]:w-1 [&::-webkit-slider-thumb]:h-[11px] [&::-webkit-slider-thumb]:bg-[#555]"
      />
      <button type="button" aria-label="放大" className="ml-[3px] w-6">
        <svg width="8" height="8" viewBox="0 0 8 8" stroke="#555" strokeWidth="2">
          <path d="M0 4h8M4 0v8" />
        </svg>
      </button>
      <button type="button" className="w-8 mr-[19px] text-left">
        {zoom}%
      </button>
    </footer>
  )
}
